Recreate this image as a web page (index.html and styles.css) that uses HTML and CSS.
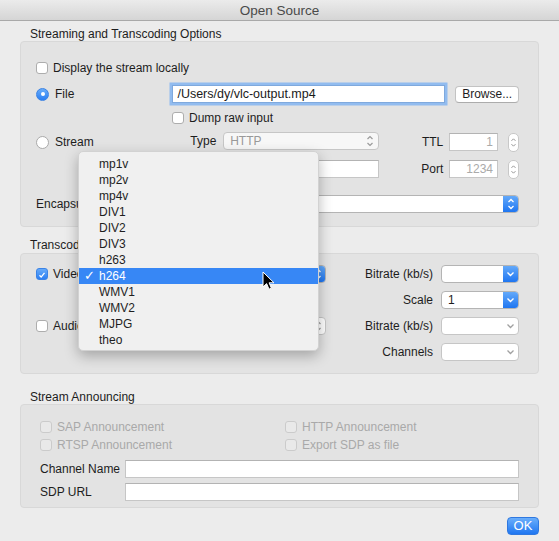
FILE: index.html
```html
<!DOCTYPE html>
<html lang="en">
<head>
    <meta charset="UTF-8">
    <title>Open Source</title>
    <link rel="stylesheet" href="styles.css">
</head>
<body>
<div class="window">
    <div class="titlebar">Open Source</div>

    <div class="content">
        <div class="group-label gl1">Streaming and Transcoding Options</div>
        <div class="group g1">
            <div class="row r1">
                <label class="check"><span class="box"></span>Display the stream locally</label>
            </div>
            <div class="row r2">
                <label class="radio on col-file"><span class="dot"></span>File</label>
                <div class="field focus path">/Users/dy/vlc-output.mp4</div>
                <div class="button browse">Browse...</div>
            </div>
            <div class="row r3">
                <label class="check dump"><span class="box"></span>Dump raw input</label>
            </div>
            <div class="row r4">
                <label class="radio col-stream"><span class="dot"></span>Stream</label>
                <span class="lbl type-lbl">Type</span>
                <div class="select plain type-sel">
                    <span class="val">HTTP</span>
                    <span class="arrow"><svg viewBox="0 0 14 18" width="14" height="18"><path d="M4.5 7 7 4.5 9.5 7M4.5 11 7 13.5 9.5 11" fill="none" stroke="#9a9a9a" stroke-width="1.2"/></svg></span>
                </div>
                <span class="lbl side-lbl">TTL</span>
                <div class="field num">1</div>
                <span class="stepper"><svg viewBox="0 0 11 19" width="11" height="19"><path d="M3 7.5 5.5 5 8 7.5M3 11.5 5.5 14 8 11.5" fill="none" stroke="#8c8c8c" stroke-width="1.1"/></svg></span>
            </div>
            <div class="row r5">
                <span class="spacer"></span>
                <div class="field addr"></div>
                <span class="lbl side-lbl">Port</span>
                <div class="field num">1234</div>
                <span class="stepper"><svg viewBox="0 0 11 19" width="11" height="19"><path d="M3 7.5 5.5 5 8 7.5M3 11.5 5.5 14 8 11.5" fill="none" stroke="#8c8c8c" stroke-width="1.1"/></svg></span>
            </div>
            <div class="row r6">
                <span class="lbl encap-lbl">Encapsulation</span>
                <div class="select blue encap-sel">
                    <span class="val">MP4/MOV</span>
                    <span class="arrow"><svg viewBox="0 0 14 18" width="14" height="18"><path d="M4.5 7 7 4.5 9.5 7M4.5 11 7 13.5 9.5 11" fill="none" stroke="#fff" stroke-width="1.3"/></svg></span>
                </div>
            </div>
        </div>

        <div class="group-label gl2">Transcoding Options</div>
        <div class="group g2">
            <div class="row tr">
                <div class="tleft">
                    <label class="check on"><span class="box"><svg viewBox="0 0 12 12" width="12" height="12"><path d="M3 6.3 5 8.5 9 3.5" fill="none" stroke="#fff" stroke-width="1.6"/></svg></span>Video</label>
                    <div class="select blue codec-sel">
                        <span class="val">h264</span>
                        <span class="arrow"><svg viewBox="0 0 14 18" width="14" height="18"><path d="M4.5 7 7 4.5 9.5 7M4.5 11 7 13.5 9.5 11" fill="none" stroke="#fff" stroke-width="1.3"/></svg></span>
                    </div>
                </div>
                <span class="lbl rlbl">Bitrate (kb/s)</span>
                <div class="select blue small">
                    <span class="val"></span>
                    <span class="arrow"><svg viewBox="0 0 15 18" width="15" height="18"><path d="M4.5 7.5 7.5 10.5 10.5 7.5" fill="none" stroke="#fff" stroke-width="1.4"/></svg></span>
                </div>
            </div>
            <div class="row tr">
                <div class="tleft"></div>
                <span class="lbl rlbl">Scale</span>
                <div class="select blue small">
                    <span class="val">1</span>
                    <span class="arrow"><svg viewBox="0 0 15 18" width="15" height="18"><path d="M4.5 7.5 7.5 10.5 10.5 7.5" fill="none" stroke="#fff" stroke-width="1.4"/></svg></span>
                </div>
            </div>
            <div class="row tr">
                <div class="tleft">
                    <label class="check"><span class="box"></span>Audio</label>
                    <div class="select plain codec-sel">
                        <span class="val"></span>
                        <span class="arrow"><svg viewBox="0 0 14 18" width="14" height="18"><path d="M4.5 7 7 4.5 9.5 7M4.5 11 7 13.5 9.5 11" fill="none" stroke="#9a9a9a" stroke-width="1.2"/></svg></span>
                    </div>
                </div>
                <span class="lbl rlbl">Bitrate (kb/s)</span>
                <div class="select plain small">
                    <span class="val"></span>
                    <span class="arrow"><svg viewBox="0 0 15 18" width="15" height="18"><path d="M4.5 7.5 7.5 10.5 10.5 7.5" fill="none" stroke="#a0a0a0" stroke-width="1.3"/></svg></span>
                </div>
            </div>
            <div class="row tr">
                <div class="tleft"></div>
                <span class="lbl rlbl">Channels</span>
                <div class="select plain small">
                    <span class="val"></span>
                    <span class="arrow"><svg viewBox="0 0 15 18" width="15" height="18"><path d="M4.5 7.5 7.5 10.5 10.5 7.5" fill="none" stroke="#a0a0a0" stroke-width="1.3"/></svg></span>
                </div>
            </div>
        </div>

        <div class="group-label gl3">Stream Announcing</div>
        <div class="group g3">
            <div class="row ar">
                <label class="check off acol"><span class="box"></span>SAP Announcement</label>
                <label class="check off"><span class="box"></span>HTTP Announcement</label>
            </div>
            <div class="row ar">
                <label class="check off acol"><span class="box"></span>RTSP Announcement</label>
                <label class="check off"><span class="box"></span>Export SDP as file</label>
            </div>
            <div class="row fr fr1">
                <span class="lbl flbl">Channel Name</span>
                <div class="field wide"></div>
            </div>
            <div class="row fr">
                <span class="lbl flbl">SDP URL</span>
                <div class="field wide"></div>
            </div>
        </div>

        <div class="actions">
            <div class="button ok">OK</div>
        </div>
    </div>

    <!-- 열려 있는 코덱 팝업 메뉴 -->
    <ul class="menu">
        <li>mp1v</li>
        <li>mp2v</li>
        <li>mp4v</li>
        <li>DIV1</li>
        <li>DIV2</li>
        <li>DIV3</li>
        <li>h263</li>
        <li class="sel"><span class="tick">✓</span>h264</li>
        <li>WMV1</li>
        <li>WMV2</li>
        <li>MJPG</li>
        <li>theo</li>
    </ul>

    <svg class="cursor" viewBox="0 0 13 20" width="13" height="20"><path d="M1 1 1 16 4.6 12.6 7 18.2 9.4 17.2 7.1 11.8 12 11.8Z" fill="#000" stroke="#fff" stroke-width="1"/></svg>
</div>
</body>
</html>
```

FILE: styles.css
```css
*{padding:0; margin:0; box-sizing:border-box;}
li{list-style:none;}

html, body{width:559px; height:541px; overflow:hidden;}
body{
    font-family:"Liberation Sans", Arial, sans-serif;
    font-size:12px;
    color:#1d1d1d;
    background:#ececec;
}
.window{position:relative; height:541px;}

.titlebar{
    height:21px;
    line-height:21px;
    text-align:center;
    font-size:13.5px;
    color:#4a4a4a;
    background:linear-gradient(#ebebeb, #d5d5d5);
    border-bottom:1px solid #a9a9a9;
}
.content{padding:0 20px;}

/* 그룹 제목과 상자 */
.group-label{padding-left:10px; line-height:14px;}
.gl1{height:20px; padding-top:6px;}
.gl2{height:26px; padding-top:11px;}
.gl3{height:30px; padding-top:16px;}

.group{
    background:#e3e3e3;
    border:1px solid #d8d8d8;
    border-radius:4px;
    padding:0 19px 0 15px;
}
.g1{height:186px; padding-top:13px;}
.g2{height:121px; padding-top:7px;}
.g3{height:104px; padding-top:13px; padding-left:19px;}

.row{display:flex; align-items:center;}
.r1{height:26px;}
.r2{height:26px;}
.r3{height:22px; padding-left:136px;}
.r4{height:26px;}
.r5{height:28px;}
.r6{height:42px;}

/* 체크박스, 라디오 */
.check, .radio{display:flex; align-items:center; white-space:nowrap;}
.check .box{
    width:12px; height:12px;
    margin-right:5px;
    background:#fff;
    border:1px solid #adadad;
    border-radius:3px;
    display:flex;
}
.check.on .box{background:linear-gradient(#65aaf9, #2c7ff3); border-color:#3b83e6;}
.check.off{color:#a9a9a9;}
.check.off .box{background:#e9e9e9; border-color:#cbcbcb;}

.radio .dot{
    width:13px; height:13px;
    margin-right:6px;
    border-radius:50%;
    background:#fff;
    border:1px solid #aaaaaa;
    position:relative;
}
.radio.on .dot{background:linear-gradient(#68acf9, #2a7ef3); border-color:#3a82e4;}
.radio.on .dot::after{
    content:"";
    position:absolute;
    left:3.5px; top:3.5px;
    width:4px; height:4px;
    border-radius:50%;
    background:#fff;
}

.col-file{width:137px;}
.col-stream{width:155px;}

/* 입력 필드 */
.field{
    height:18px;
    background:#fff;
    border:1px solid #c6c6c6;
    border-top-color:#b3b3b3;
    padding:0 4px;
    line-height:16px;
    white-space:nowrap;
    overflow:hidden;
}
.field.focus{box-shadow:0 0 0 2.5px #92bcef; border-color:#7fa9dd;}
.path{width:274px; color:#1a1a1a; font-size:12.5px;}
.num{width:49px; text-align:right; color:#aaa;}
.addr{width:157px;}
.wide{flex:1;}

.button{
    background:#fff;
    border:1px solid #c3c3c3;
    border-bottom-color:#acacac;
    border-radius:4px;
    text-align:center;
}
.browse{width:64px; height:17px; line-height:15px; margin-left:10px;}

.lbl{white-space:nowrap;}
.type-lbl{width:33px; margin-top:-3px;}
.side-lbl{width:71px; text-align:right; padding-right:6px;}
.spacer{width:188px;}
.encap-lbl{width:98px;}

.stepper{
    width:11px; height:19px;
    margin-left:10px;
    background:#fff;
    border:1px solid #c8c8c8;
    border-radius:5px;
    display:flex; align-items:center; justify-content:center;
    overflow:hidden;
}

/* 셀렉트 박스 */
.select{
    height:18px;
    display:flex;
    background:#fff;
    border:1px solid #c6c6c6;
    border-radius:4px;
    overflow:hidden;
}
.select .val{flex:1; padding-left:6px; line-height:16px; white-space:nowrap;}
.select .arrow{display:flex; align-items:center; justify-content:center; width:15px;}
.select.blue{border-color:#b4b4b4;}
.select.blue .arrow{background:linear-gradient(#63a9fa, #1f76f1);}
.select.plain .val{color:#999;}
.type-sel{width:156px; background:#f7f7f7; margin-top:-3px;}
.encap-sel{flex:1;}

.tr{height:26px;}
.tleft{width:290px; display:flex; align-items:center;}
.tleft .check{width:75px;}
.codec-sel{flex:1;}
.rlbl{flex:1; text-align:right; padding-right:8px;}
.small{width:78px;}

.ar{height:18px;}
.acol{width:245px;}
.fr{height:23px;}
.fr1{margin-top:3px;}
.flbl{width:85px;}

.actions{display:flex; justify-content:flex-end; padding-top:9px;}
.ok{
    width:32px; height:18px;
    line-height:16px;
    color:#fff;
    font-size:13px;
    background:linear-gradient(#6aaefb, #1f76f1);
    border-color:#2f78e0;
}

/* 팝업 메뉴 */
.menu{
    position:absolute;
    left:78px; top:151px;
    width:241px; height:200px;
    padding:4px 0;
    background:#f0f0f0;
    border:1px solid #d2d2d2;
    border-radius:5px;
    box-shadow:0 5px 14px rgba(0,0,0,0.28);
}
.menu li{
    position:relative;
    height:16px;
    line-height:16px;
    padding-left:20px;
    color:#1e1e1e;
}
.menu li.sel{background:#3787f5; color:#fff;}
.menu .tick{
    position:absolute;
    left:5px; top:0;
    font-family:"DejaVu Sans", sans-serif;
    font-size:13px;
    font-weight:bold;
}

.cursor{position:absolute; left:262px; top:271px;}
```
